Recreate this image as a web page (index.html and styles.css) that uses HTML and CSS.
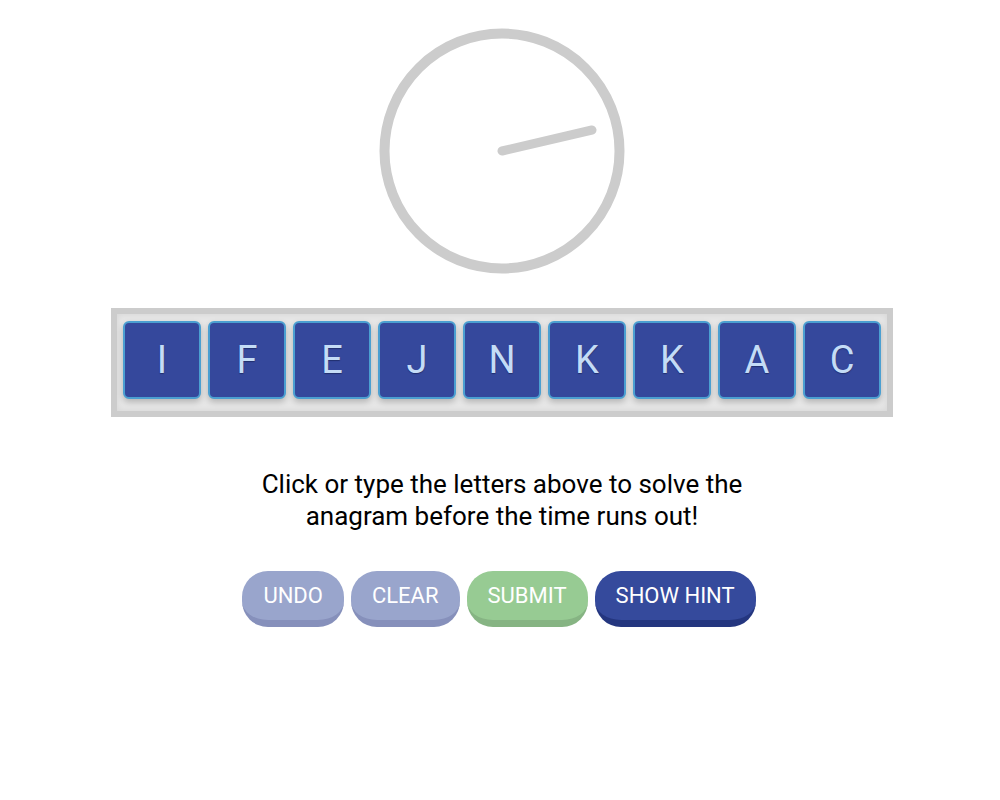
FILE: index.html
```html
<!DOCTYPE html>
<html>
<head>
<meta charset="utf-8">
<link rel="stylesheet" href="styles.css">
</head>
<body>
<main class="game">
  <div class="clock">
    <svg width="246" height="246" viewBox="0 0 246 246">
      <circle cx="123" cy="123" r="117.5" fill="none" stroke="#cccccc" stroke-width="10"/>
      <line x1="123" y1="123" x2="213" y2="102" stroke="#cccccc" stroke-width="9" stroke-linecap="round"/>
    </svg>
  </div>
  <div class="tray">
    <div class="tile">I</div>
    <div class="tile">F</div>
    <div class="tile">E</div>
    <div class="tile">J</div>
    <div class="tile">N</div>
    <div class="tile">K</div>
    <div class="tile">K</div>
    <div class="tile">A</div>
    <div class="tile">C</div>
  </div>
  <p class="instructions">Click or type the letters above to solve the<br>anagram before the time runs out!</p>
  <div class="actions">
    <button class="btn btn-muted">UNDO</button>
    <button class="btn btn-muted">CLEAR</button>
    <button class="btn btn-green">SUBMIT</button>
    <button class="btn btn-primary">SHOW HINT</button>
  </div>
</main>
</body>
</html>
```
FILE: styles.css
```css
html, body {
  margin: 0;
  padding: 0;
  background: #ffffff;
}
body {
  font-family: Roboto, "Liberation Sans", Arial, sans-serif;
  color: #000;
}
.game {
  display: flex;
  flex-direction: column;
  align-items: center;
  padding-top: 28px;
  padding-left: 4px;
}
.clock {
  width: 246px;
  height: 246px;
}
.clock svg {
  display: block;
}
.tray {
  margin-top: 34px;
  display: flex;
  gap: 7px;
  padding: 7px 6px 12px 6px;
  background: #e6e6e6;
  border: 6px solid #cccccc;
  box-shadow: inset 0 0 6px rgba(0,0,0,0.08);
}
.tile {
  box-sizing: border-box;
  width: 78px;
  height: 78px;
  background: #35489c;
  border: 2px solid #4b9fd1;
  border-radius: 6px;
  box-shadow: 0 3px 6px rgba(0,0,0,0.22);
  color: #c4dcf6;
  font-size: 38px;
  display: flex;
  align-items: center;
  justify-content: center;
  text-shadow: 0 1px 1px rgba(20,30,80,0.6);
}
.instructions {
  margin: 51px 0 0 0;
  font-size: 26px;
  line-height: 32px;
  text-align: center;
}
.actions {
  margin-top: 39px;
  margin-left: -6px;
  display: flex;
  align-items: flex-start;
  gap: 7px;
}
.btn {
  box-sizing: border-box;
  height: 56px;
  padding: 0 21px;
  border: none;
  border-bottom: 7px solid;
  border-radius: 26px;
  font-family: Roboto, "Liberation Sans", Arial, sans-serif;
  font-size: 22px;
  line-height: 49px;
  color: #ffffff;
  cursor: pointer;
}
.btn-muted {
  background: #99a5cc;
  border-bottom-color: #8690bb;
}
.btn-green {
  background: #97cb93;
  border-bottom-color: #86b483;
}
.btn-primary {
  background: #354a9c;
  border-bottom-color: #24367f;
}
```
